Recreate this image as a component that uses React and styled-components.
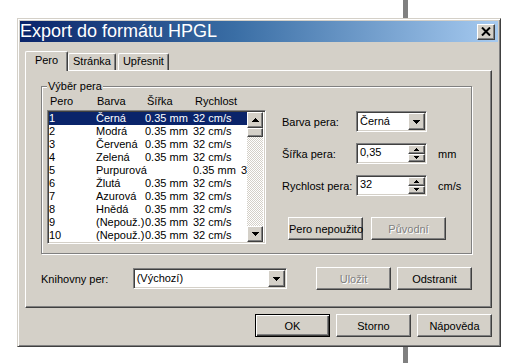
import React from 'react';
import styled, { createGlobalStyle, css } from 'styled-components';

const GlobalStyle = createGlobalStyle`
  html, body { margin: 0; padding: 0; }
  body {
    min-height: 100vh;
    background: linear-gradient(90deg, transparent 403px, #808080 403px, #808080 408px, transparent 408px) #fff;
    font-family: "Liberation Sans", Arial, sans-serif;
    font-size: 11px;
    color: #000;
  }
  #root { padding: 18px 0 0 17px; }
`;

const raised = css`
  background: #d4d0c8;
  border: 1px solid;
  border-color: #fff #404040 #404040 #fff;
  box-shadow: inset -1px -1px #808080, inset 1px 1px #d4d0c8;
`;

const sunken = css`
  background: #fff;
  border: 1px solid;
  border-color: #808080 #fff #fff #808080;
  box-shadow: inset 1px 1px #404040, inset -1px -1px #d4d0c8;
`;

const Window = styled.div`
  box-sizing: border-box;
  width: 484px;
  height: 329px;
  padding: 2px;
  background: #d4d0c8;
  border: 1px solid;
  border-color: #d4d0c8 #404040 #404040 #d4d0c8;
  box-shadow: inset 1px 1px #fff, inset -1px -1px #808080;
  display: flex;
  flex-direction: column;
`;

const TitleBar = styled.div`
  height: 21px;
  padding-right: 3px;
  display: flex;
  align-items: center;
  justify-content: space-between;
  background: linear-gradient(90deg, #0a246a 0%, #3a6ea5 45%, #a6caf0 100%);
`;

const Title = styled.span`
  font-size: 18px;
  line-height: 21px;
  color: #fff;
  white-space: nowrap;
`;

const CloseButton = styled.div`
  ${raised}
  box-sizing: border-box;
  width: 18px;
  height: 16px;
  display: flex;
  align-items: center;
  justify-content: center;
`;

const Body = styled.div`
  padding: 9px 6px 0 5px;
  display: flex;
  flex-direction: column;
`;

const TabStrip = styled.div`
  height: 19px;
  padding-left: 2px;
  display: flex;
  align-items: flex-end;
  gap: 2px;
`;

const Tab = styled.div`
  box-sizing: border-box;
  min-width: 43px;
  padding: 0 4px;
  height: 17px;
  line-height: 15px;
  text-align: center;
  white-space: nowrap;
  background: #d4d0c8;
  border-top: 1px solid #fff;
  border-left: 1px solid #fff;
  border-right: 1px solid #404040;
  border-radius: 2px 2px 0 0;
  box-shadow: inset -1px 0 #808080;
  ${p => p.$active && css`
    position: relative;
    z-index: 1;
    height: 20px;
    line-height: 17px;
    margin: 0 -2px -1px;
  `}
`;

const TabPanel = styled.div`
  box-sizing: border-box;
  height: 238px;
  padding: 15px 19px 0 15px;
  background: #d4d0c8;
  border: 1px solid;
  border-color: #fff #404040 #404040 #fff;
  box-shadow: inset -1px -1px #808080;
`;

const GroupBox = styled.div`
  position: relative;
  box-sizing: border-box;
  height: 168px;
  padding: 8px 5px 0 5px;
  border: 1px solid #808080;
  box-shadow: inset 1px 1px #fff, 1px 1px #fff;
`;

const Legend = styled.span`
  position: absolute;
  top: -7px;
  left: 5px;
  padding: 0 1px;
  line-height: 13px;
  background: #d4d0c8;
`;

const GroupContent = styled.div`
  display: flex;
`;

const ListColumn = styled.div`
  display: flex;
  flex-direction: column;
  gap: 2px;
`;

const HeaderRow = styled.div`
  height: 13px;
  line-height: 13px;
  padding-left: 3px;
  display: grid;
  grid-template-columns: 47px 50px 48px auto;
  white-space: nowrap;
`;

const ListBox = styled.div`
  ${sunken}
  box-sizing: border-box;
  width: 219px;
  height: 134px;
  padding: 1px;
  display: flex;
`;

const Rows = styled.div`
  width: 198px;
  height: 130px;
  overflow: hidden;
`;

const Row = styled.div`
  height: 13px;
  line-height: 13px;
  display: grid;
  grid-template-columns: 47px 49px 48px 48px 48px;
  white-space: nowrap;
  background: ${p => (p.$selected ? '#0a246a' : 'transparent')};
  color: ${p => (p.$selected ? '#fff' : '#000')};
`;

const Cell = styled.span`
  grid-column: span ${p => p.$span || 1};
`;

const ScrollBar = styled.div`
  width: 16px;
  height: 130px;
  display: flex;
  flex-direction: column;
`;

const ScrollButton = styled.div`
  ${raised}
  box-sizing: border-box;
  width: 16px;
  height: 16px;
  flex: none;
  display: flex;
  align-items: center;
  justify-content: center;
`;

const Track = styled.div`
  flex: 1;
  background-color: #fff;
  background-image: conic-gradient(#d4d0c8 0 25%, #fff 0 50%, #d4d0c8 0 75%, #fff 0);
  background-size: 2px 2px;
`;

const Thumb = styled.div`
  ${raised}
  box-sizing: border-box;
  height: 9px;
`;

const RightColumn = styled.div`
  margin-left: 16px;
  padding-top: 16px;
  display: flex;
  flex-direction: column;
`;

const FieldGrid = styled.div`
  display: grid;
  grid-template-columns: 74px 71px auto;
  grid-auto-rows: 21px;
  row-gap: 11px;
  align-items: center;
`;

const FieldLabel = styled.span`
  white-space: nowrap;
`;

const Unit = styled.span`
  margin-left: 11px;
`;

const Combo = styled.div`
  ${sunken}
  box-sizing: border-box;
  width: ${p => p.$width}px;
  height: 21px;
  padding: 1px;
  display: flex;
  align-items: stretch;
`;

const FieldText = styled.span`
  flex: 1;
  padding-left: 2px;
  line-height: ${p => (p.$top ? '14px' : '17px')};
  white-space: nowrap;
  overflow: hidden;
`;

const DropButton = styled.div`
  ${raised}
  box-sizing: border-box;
  width: 17px;
  display: flex;
  align-items: center;
  justify-content: center;
`;

const SpinButtons = styled.div`
  width: 17px;
  display: flex;
  flex-direction: column;
`;

const SpinHalf = styled.div`
  ${raised}
  box-sizing: border-box;
  flex: 1;
  display: flex;
  align-items: center;
  justify-content: center;
`;

const PenButtons = styled.div`
  margin-top: 21px;
  padding-left: 6px;
  display: flex;
  gap: 8px;
`;

const Button = styled.button`
  ${raised}
  box-sizing: border-box;
  width: 75px;
  height: 23px;
  padding: 0;
  font-family: "Liberation Sans", Arial, sans-serif;
  font-size: 11px;
  white-space: nowrap;
  color: ${p => (p.disabled ? '#808080' : '#000')};
  text-shadow: ${p => (p.disabled ? '1px 1px #fff' : 'none')};
  ${p => p.$default && css`
    border-color: #000;
    box-shadow: inset 1px 1px #fff, inset -1px -1px #404040, inset -2px -2px #808080;
  `}
`;

const LibraryRow = styled.div`
  margin-top: 13px;
  height: 23px;
  display: flex;
  align-items: center;
`;

const LibraryLabel = styled.span`
  width: 92px;
  white-space: nowrap;
`;

const LibraryActions = styled.div`
  margin-left: 29px;
  display: flex;
  gap: 6px;
`;

const DialogButtons = styled.div`
  margin-top: 6px;
  display: flex;
  justify-content: flex-end;
  gap: 6px;
`;

const Arrow = ({ up, w = 7, h = 4 }) => (
  <svg width={w} height={h} viewBox={`0 0 ${w} ${h}`} shapeRendering="crispEdges">
    <polygon points={up ? `0,${h} ${w},${h} ${w / 2},0` : `0,0 ${w},0 ${w / 2},${h}`} fill="#000" />
  </svg>
);

const pens = [
  { n: '1', c: 'Černá' },
  { n: '2', c: 'Modrá' },
  { n: '3', c: 'Červená' },
  { n: '4', c: 'Zelená' },
  { n: '5', c: 'Purpurová', wide: true },
  { n: '6', c: 'Žlutá' },
  { n: '7', c: 'Azurová' },
  { n: '8', c: 'Hnědá' },
  { n: '9', c: '(Nepouž.)' },
  { n: '10', c: '(Nepouž.)' },
];

const Spin = ({ value }) => (
  <Combo $width={71}>
    <FieldText $top>{value}</FieldText>
    <SpinButtons>
      <SpinHalf><Arrow up w={5} h={3} /></SpinHalf>
      <SpinHalf><Arrow w={5} h={3} /></SpinHalf>
    </SpinButtons>
  </Combo>
);

export default function App() {
  return (
    <>
      <GlobalStyle />
      <Window>
        <TitleBar>
          <Title>Export do formátu HPGL</Title>
          <CloseButton>
            <svg width="10" height="9" viewBox="0 0 10 9">
              <path d="M1 0.5 L9 8.5 M9 0.5 L1 8.5" stroke="#000" strokeWidth="2" />
            </svg>
          </CloseButton>
        </TitleBar>
        <Body>
          <TabStrip>
            <Tab $active>Pero</Tab>
            <Tab>Stránka</Tab>
            <Tab>Upřesnit</Tab>
          </TabStrip>
          <TabPanel>
            <GroupBox>
              <Legend>Výběr pera</Legend>
              <GroupContent>
                <ListColumn>
                  <HeaderRow>
                    <span>Pero</span>
                    <span>Barva</span>
                    <span>Šířka</span>
                    <span>Rychlost</span>
                  </HeaderRow>
                  <ListBox>
                    <Rows>
                      {pens.map((p, i) => (
                        <Row key={p.n} $selected={i === 0}>
                          <Cell>{p.n}</Cell>
                          <Cell $span={p.wide ? 2 : 1}>{p.c}</Cell>
                          <Cell>0.35 mm</Cell>
                          <Cell>32 cm/s</Cell>
                        </Row>
                      ))}
                    </Rows>
                    <ScrollBar>
                      <ScrollButton><Arrow up /></ScrollButton>
                      <Track><Thumb /></Track>
                      <ScrollButton><Arrow /></ScrollButton>
                    </ScrollBar>
                  </ListBox>
                </ListColumn>
                <RightColumn>
                  <FieldGrid>
                    <FieldLabel>Barva pera:</FieldLabel>
                    <Combo $width={71}>
                      <FieldText>Černá</FieldText>
                      <DropButton><Arrow /></DropButton>
                    </Combo>
                    <span />
                    <FieldLabel>Šířka pera:</FieldLabel>
                    <Spin value="0,35" />
                    <Unit>mm</Unit>
                    <FieldLabel>Rychlost pera:</FieldLabel>
                    <Spin value="32" />
                    <Unit>cm/s</Unit>
                  </FieldGrid>
                  <PenButtons>
                    <Button>Pero nepoužito</Button>
                    <Button disabled>Původní</Button>
                  </PenButtons>
                </RightColumn>
              </GroupContent>
            </GroupBox>
            <LibraryRow>
              <LibraryLabel>Knihovny per:</LibraryLabel>
              <Combo $width={155}>
                <FieldText>(Výchozí)</FieldText>
                <DropButton><Arrow /></DropButton>
              </Combo>
              <LibraryActions>
                <Button disabled>Uložit</Button>
                <Button>Odstranit</Button>
              </LibraryActions>
            </LibraryRow>
          </TabPanel>
          <DialogButtons>
            <Button $default>OK</Button>
            <Button>Storno</Button>
            <Button>Nápověda</Button>
          </DialogButtons>
        </Body>
      </Window>
    </>
  );
}
